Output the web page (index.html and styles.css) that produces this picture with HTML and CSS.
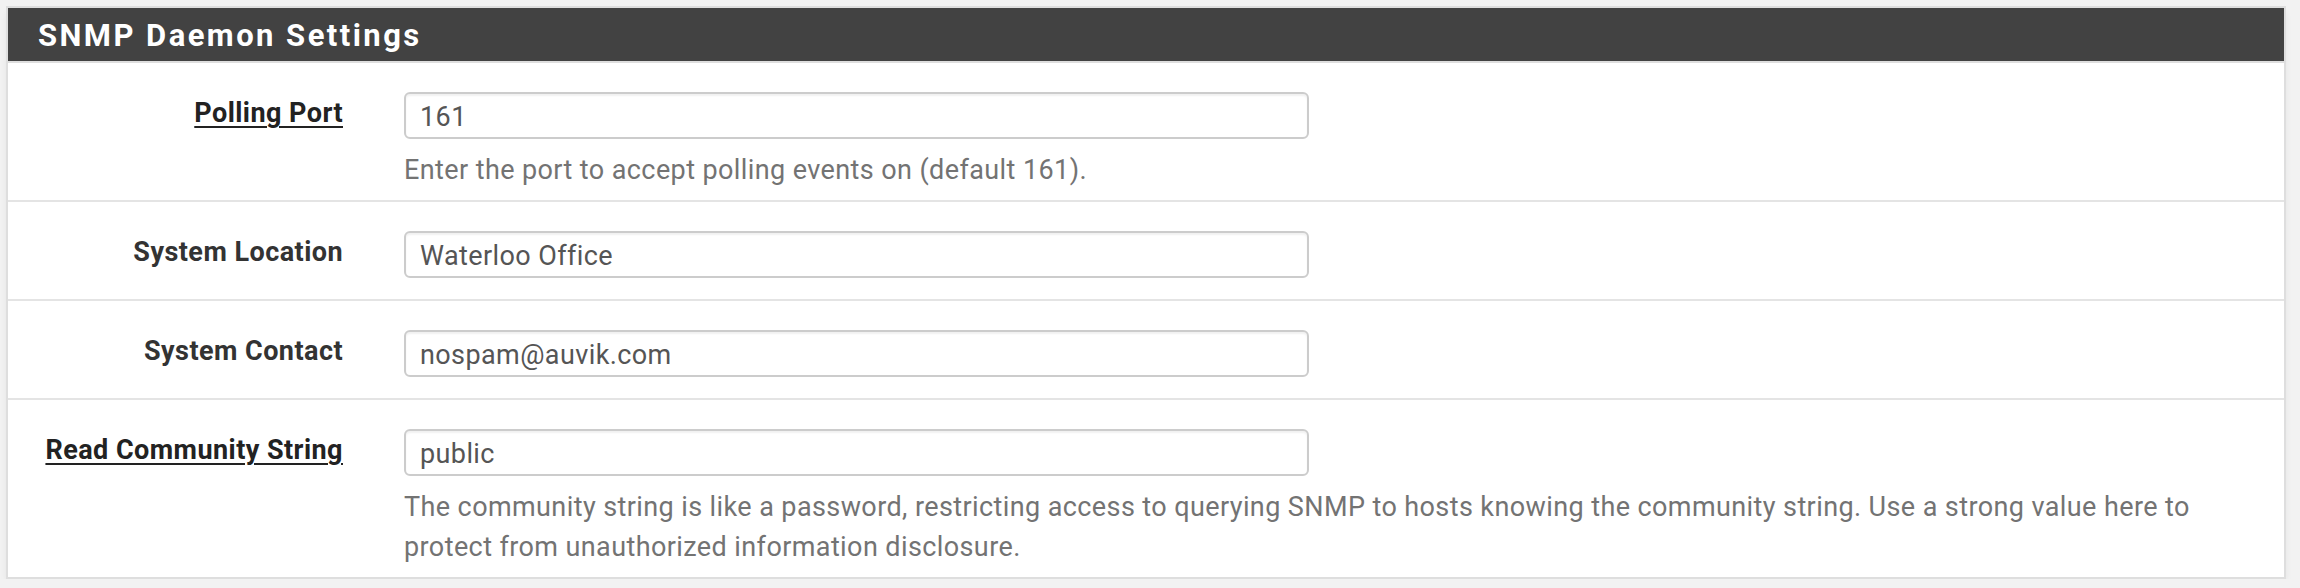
FILE: index.html
```html
<!DOCTYPE html>
<html>
<head>
<meta charset="utf-8">
<link rel="stylesheet" href="styles.css">
</head>
<body>
<div class="panel">
  <div class="panel-heading"><h2 class="panel-title">SNMP Daemon Settings</h2></div>
  <div class="panel-body">
    <div class="form-group">
      <label class="col-label"><span class="info-link">Polling Port</span></label>
      <div class="col-field">
        <input class="form-control" type="text" value="161">
        <span class="help-block">Enter the port to accept polling events on (default 161).</span>
      </div>
    </div>
    <div class="form-group">
      <label class="col-label">System Location</label>
      <div class="col-field">
        <input class="form-control" type="text" value="Waterloo Office">
      </div>
    </div>
    <div class="form-group">
      <label class="col-label">System Contact</label>
      <div class="col-field">
        <input class="form-control" type="text" value="nospam@auvik.com">
      </div>
    </div>
    <div class="form-group last">
      <label class="col-label"><span class="info-link">Read Community String</span></label>
      <div class="col-field">
        <input class="form-control" type="text" value="public">
        <span class="help-block">The community string is like a password, restricting access to querying SNMP to hosts knowing the community string. Use a strong value here to protect from unauthorized information disclosure.</span>
      </div>
    </div>
  </div>
</div>
</body>
</html>
```

FILE: styles.css
```css
* { box-sizing: border-box; }

html, body {
  margin: 0;
  padding: 0;
  background: #f2f2f2;
}

body {
  padding: 6px 14px 0 6px;
  font-family: Roboto, "Liberation Sans", sans-serif;
  color: #333333;
}

.panel {
  width: 2280px;
  border: 2px solid #dedede;
  background: #ffffff;
  box-shadow: 0 5px 8px -2px rgba(0, 0, 0, 0.09);
}

.panel-heading {
  background: #424242;
  height: 55px;
  border-bottom: 2px solid #dedede;
  display: flex;
  align-items: center;
  padding-left: 30px;
}

.panel-title {
  margin: 0;
  color: #ffffff;
  font-size: 31px;
  font-weight: 700;
  letter-spacing: 2.45px;
  line-height: 1;
  padding-top: 1px;
}

.form-group {
  display: flex;
  align-items: flex-start;
  padding: 29px 0 10px;
  border-bottom: 2px solid #e4e4e4;
}

.form-group.last {
  border-bottom: none;
}

.col-label {
  width: 335px;
  flex: none;
  text-align: right;
  font-size: 27px;
  font-weight: 700;
  letter-spacing: 0.45px;
  line-height: 42px;
  color: #333333;
  margin-right: 61px;
}

.info-link {
  text-decoration: underline;
  text-decoration-thickness: 2px;
  text-underline-offset: 4px;
  color: #222222;
}

.col-field {
  width: 1850px;
  flex: none;
}

.form-control {
  display: block;
  width: 905px;
  height: 47px;
  margin: 0 0 11px;
  padding: 2px 14px 0;
  border: 2px solid #cccccc;
  border-radius: 6px;
  box-shadow: inset 0 2px 2px rgba(0, 0, 0, 0.06);
  font-family: Roboto, "Liberation Sans", sans-serif;
  font-size: 27px;
  letter-spacing: 0.4px;
  color: #555555;
  background: #ffffff;
  outline: none;
}

.help-block {
  display: block;
  font-size: 27px;
  letter-spacing: 0.4px;
  line-height: 40px;
  color: #737373;
}
```
